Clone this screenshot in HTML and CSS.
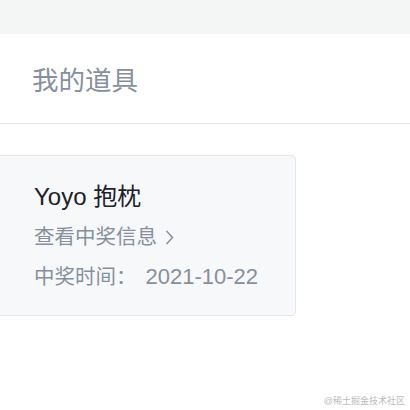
FILE: index.html
```html
<!DOCTYPE html>
<html lang="zh-CN">
<head>
<meta charset="utf-8">
<title>我的道具</title>
<link rel="stylesheet" href="styles.css">
</head>
<body>
<div class="topbar"></div>
<div class="header">我的道具</div>
<div class="list">
  <div class="card">
    <div class="name">Yoyo 抱枕</div>
    <div class="link">查看中奖信息<svg class="chev" width="9" height="15" viewBox="0 0 9 15"><path d="M1.5 1 L7.5 7.5 L1.5 14" fill="none" stroke="#86909c" stroke-width="1.5"/></svg></div>
    <div class="time">中奖时间：<span class="date">2021-10-22</span></div>
  </div>
</div>
<div class="watermark">@稀土掘金技术社区</div>
</body>
</html>
```
FILE: styles.css
```css
html, body {
  margin: 0;
  padding: 0;
  background: #ffffff;
  font-family: "Liberation Sans", "Noto Sans CJK SC", sans-serif;
  overflow: hidden;
}
.topbar {
  height: 34px;
  background: #f4f5f5;
}
.header {
  box-sizing: border-box;
  height: 90px;
  padding-left: 32px;
  display: flex;
  align-items: center;
  font-size: 26.5px;
  color: #86909c;
  border-bottom: 1px solid #e4e6eb;
}
.list {
  padding-top: 31px;
}
.card {
  box-sizing: border-box;
  margin-left: -20px;
  width: 316px;
  padding: 21px 0 18px 53px;
  background: #f7f8fa;
  border: 1px solid #e4e6eb;
  border-radius: 4px;
}
.name {
  height: 40px;
  line-height: 40px;
  font-size: 24px;
  color: #1d2129;
}
.link, .time {
  height: 40px;
  line-height: 40px;
  font-size: 20.5px;
  color: #86909c;
  display: flex;
  align-items: center;
}
.chev {
  margin-left: 8px;
}
.date {
  font-size: 22px;
  margin-left: 9px;
}
.watermark {
  position: absolute;
  right: 5px;
  bottom: 3px;
  font-size: 9px;
  color: #bbbbbb;
}
```
